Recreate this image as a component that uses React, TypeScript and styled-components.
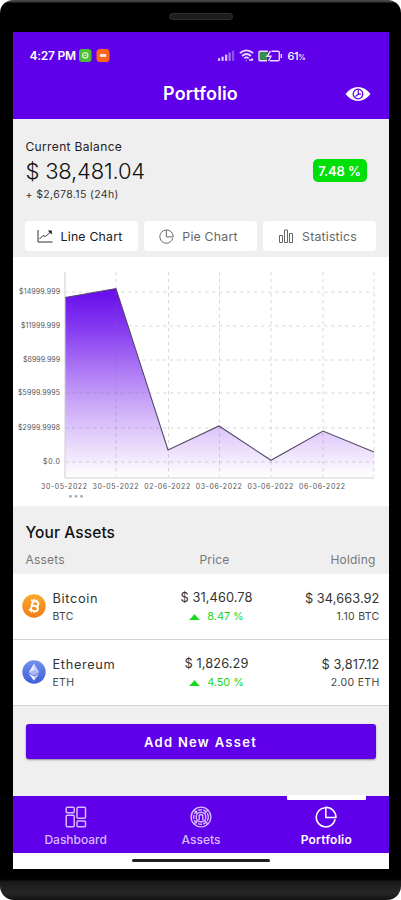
import React from "react";
import styled, { createGlobalStyle, css } from "styled-components";

const purple = "#6000ea";

const Global = createGlobalStyle`
  * { box-sizing: border-box; }
  body { margin: 0; background: #fff; font-family: Inter, "Liberation Sans", sans-serif; }
`;

const Phone = styled.div`
  width: 401px;
  height: 900px;
  display: flex;
  flex-direction: column;
  align-items: center;
  background: linear-gradient(#4b4b4b 0, #3a3a3a 2px, #000 3px, #000 879px, #1b1b1b 882px, #262626 893px, #111 900px);
  border-radius: 13px 13px 14px 14px;
  overflow: hidden;
`;
const Bezel = styled.div`
  height: 32px;
  flex: none;
  padding-top: 13px;
`;
const Speaker = styled.div`
  width: 64px;
  height: 7px;
  border-radius: 4px;
  border: 1px solid #303030;
  background: #1d1d1d;
`;
const Screen = styled.main`
  width: 376px;
  height: 837px;
  flex: none;
  display: flex;
  flex-direction: column;
  background: #efefef;
`;
const Header = styled.header`
  height: 87px;
  flex: none;
  background: ${purple};
  color: #fff;
`;
const StatusBar = styled.div`
  height: 44px;
  padding: 3px 83px 0 17px;
  display: flex;
  align-items: center;
  justify-content: space-between;
`;
const StatusGroup = styled.div<{ $gap: number }>`
  display: flex;
  align-items: center;
  gap: ${(p) => p.$gap}px;
`;
const Clock = styled.span`
  font-size: 12px;
  font-weight: 600;
  letter-spacing: -0.25px;
  width: 45px;
  white-space: nowrap;
`;
const Battery = styled.span`
  font-size: 11px;
  font-weight: 500;
  letter-spacing: -0.3px;
  small { font-size: 7.5px; }
`;
const TitleBar = styled.div`
  height: 35px;
  display: grid;
  grid-template-columns: 1fr auto 1fr;
  align-items: center;
  padding-right: 18px;
  padding-left: 18px;
  svg { justify-self: end; }
`;
const Title = styled.h1`
  grid-column: 2;
  margin: 0;
  font-size: 18px;
  line-height: 24px;
  font-weight: 600;
  letter-spacing: 0.15px;
`;
const Balance = styled.section`
  height: 138px;
  flex: none;
  padding: 20px 13px 0;
`;
const BalanceLabel = styled.div`
  font-size: 12px;
  line-height: 16px;
  letter-spacing: 0.35px;
  color: #222;
`;
const BalanceRow = styled.div`
  display: flex;
  justify-content: space-between;
  align-items: center;
  height: 32px;
  padding-right: 9px;
`;
const Amount = styled.div`
  font-size: 22px;
  font-weight: 350;
  color: #111;
  letter-spacing: -0.2px;
`;
const Badge = styled.div`
  width: 54px;
  height: 23px;
  margin-top: -1px;
  border-radius: 5px;
  background: #00df08;
  color: #fff;
  font-size: 13px;
  font-weight: 600;
  line-height: 24px;
  text-align: center;
  letter-spacing: -0.1px;
`;
const Change = styled.div`
  font-size: 10.5px;
  line-height: 16px;
  letter-spacing: 0.37px;
  color: #333;
`;
const ChartTabs = styled.nav`
  display: grid;
  grid-template-columns: repeat(3, 113px);
  gap: 6px;
  margin: 18px 0 0 -1px;
`;
const ChartTab = styled.button<{ $active?: boolean }>`
  height: 30px;
  border: 0;
  border-radius: 4px;
  padding: 0 3px 0 0;
  background: #fff;
  display: flex;
  align-items: center;
  justify-content: center;
  gap: 8px;
  font: 400 12.3px Inter, sans-serif;
  letter-spacing: 0.2px;
  color: ${(p) => (p.$active ? "#181818" : "#666")};
  white-space: nowrap;
`;
const ChartPanel = styled.section`
  height: 249px;
  flex: none;
  background: #fff;
  svg { display: block; }
`;
const AssetsHead = styled.section`
  height: 68px;
  flex: none;
  padding: 16px 13px 0;
`;
const AssetsTitle = styled.h2`
  margin: 0 0 9px;
  font-size: 15.5px;
  line-height: 21px;
  height: 20px;
  font-weight: 500;
  letter-spacing: 0.1px;
  color: #111;
`;
const columns = css`
  display: grid;
  grid-template-columns: 1fr 110px 1fr;
`;
const ColumnNames = styled.div`
  ${columns}
  font-size: 12px;
  line-height: 17px;
  letter-spacing: 0.2px;
  color: #777;
  span:nth-child(2) { text-align: center; padding-left: 28px; }
  span:nth-child(3) { text-align: right; }
`;
const AssetRow = styled.div`
  ${columns}
  height: 66px;
  flex: none;
  padding: 0 9px;
  background: #fff;
  border-bottom: 1px solid #d2d2d2;
`;
const Coin = styled.div`
  display: flex;
  gap: 7px;
  svg { margin-top: 20px; flex: none; }
`;
const Cell = styled.div<{ $align?: string; $top?: number }>`
  padding-top: ${(p) => p.$top ?? 16}px;
  text-align: ${(p) => p.$align ?? "left"};
  white-space: nowrap;
`;
const PriceCell = styled(Cell)`
  padding-left: 30px;
  margin-right: -2px;
`;
const Main = styled.div<{ $wide?: boolean }>`
  font-size: 12.8px;
  line-height: 18px;
  letter-spacing: ${(p) => (p.$wide ? 0.65 : 0.08)}px;
  color: #333;
`;
const Sub = styled.div`
  font-size: 10.5px;
  line-height: 18px;
  letter-spacing: 0.3px;
  color: #444;
`;
const Gain = styled.div`
  display: flex;
  align-items: center;
  justify-content: center;
  gap: 7px;
  font-size: 10.8px;
  line-height: 20px;
  color: #16d81a;
`;
const Actions = styled.div`
  flex: 1;
  padding: 18px 13px 0;
`;
const AddButton = styled.button`
  width: 350px;
  height: 35px;
  border: 0;
  border-radius: 3px;
  background: ${purple};
  box-shadow: 0 1px 2px rgba(0, 0, 0, 0.4);
  color: #fff;
  font: 600 13px Inter, sans-serif;
  letter-spacing: 1.3px;
`;
const TabBar = styled.nav`
  height: 57px;
  flex: none;
  display: grid;
  grid-template-columns: repeat(3, 1fr);
  background: ${purple};
`;
const Tab = styled.a<{ $active?: boolean }>`
  position: relative;
  display: flex;
  flex-direction: column;
  align-items: center;
  padding-top: 10px;
  padding-left: 1px;
  gap: 3px;
  font-size: 12px;
  line-height: 18px;
  font-weight: 500;
  letter-spacing: -0.02px;
  color: ${(p) => (p.$active ? "#fff" : "#d6bcff")};
  ${(p) =>
    p.$active &&
    css`
      font-weight: 600;
      letter-spacing: 0.25px;
      &::before {
        content: "";
        position: absolute;
        top: -1px;
        width: 79px;
        height: 5px;
        border-radius: 1px;
        background: #fff;
      }
    `}
`;
const HomeBar = styled.div`
  height: 16px;
  flex: none;
  display: flex;
  justify-content: center;
  background: #fff;
  padding-top: 6px;
  &::after {
    content: "";
    width: 138px;
    height: 3px;
    border-radius: 2px;
    background: #202020;
  }
`;

const gridX = [52, 103, 155.5, 206.5, 258, 310, 361];
const gridY = [35, 69, 103, 136, 171, 205];
const yLabels = ["$14999.999", "$11999.999", "$8999.999", "$5999.9995", "$2999.9998", "$0.0"];
const yWidths = [41, 39, 37, 42, 42, 17];
const xLabels = ["30-05-2022", "30-05-2022", "02-06-2022", "03-06-2022", "03-06-2022", "06-06-2022"];
const line = "M52 40.5 L103 31.5 L155 193 L206 169 L258 203.3 L310 174 L361 195";

function PortfolioChart() {
  return (
    <svg width="376" height="249" viewBox="0 0 376 249" fontFamily="Inter, sans-serif" fontSize="7">
      <defs>
        <linearGradient id="area" gradientUnits="userSpaceOnUse" x1="0" y1="31" x2="0" y2="221">
          <stop offset="0" stopColor="#6000ea" stopOpacity="0.97" />
          <stop offset="0.2" stopColor="#6608ee" stopOpacity="0.81" />
          <stop offset="0.6" stopColor="#7417ed" stopOpacity="0.39" />
          <stop offset="1" stopColor="#7d25f0" stopOpacity="0" />
        </linearGradient>
      </defs>
      <path d={`${line} V220.5 H52 Z`} fill="url(#area)" />
      <g stroke="#777" strokeOpacity="0.28" strokeDasharray="3.5 3.5">
        {gridX.slice(1).map((x) => <path key={x} d={`M${x} 15V220`} />)}
        {gridY.map((y) => <path key={y} d={`M52 ${y}H361`} />)}
      </g>
      <path d="M52 15V221H361" fill="none" stroke="#cfcfcf" />
      <path d={line} fill="none" stroke="#554b68" strokeWidth="1.1" />
      {yLabels.map((t, i) => (
        <text key={t} x={47 - yWidths[i]} y={gridY[i] + 2.3} textLength={yWidths[i]} fill="#555">{t}</text>
      ))}
      {xLabels.map((t, i) => (
        <text key={i} x={28 + i * 51.6} y="232" textLength="46" fill="#555">{t}</text>
      ))}
      <g fill="#aaa">
        <circle cx="57.5" cy="239.3" r="1.4" />
        <circle cx="63" cy="239.3" r="1.4" />
        <circle cx="68.5" cy="239.3" r="1.4" />
      </g>
    </svg>
  );
}

const StatusIcons = () => (
  <>
    <svg width="17" height="13" viewBox="0 0 17 13" fill="#d8c2ff">
      <rect y="9" width="2.2" height="3" rx=".8" />
      <rect x="3.5" y="7.5" width="2.2" height="4.5" rx=".8" />
      <rect x="7" y="5.5" width="2.2" height="6.5" rx=".8" />
      <rect x="10.5" y="3.5" width="2.2" height="8.5" rx=".8" opacity=".6" />
      <rect x="14" y="1.5" width="2.2" height="10.5" rx=".8" opacity=".4" />
    </svg>
    <svg width="15" height="13" viewBox="0 0 15 13" fill="none" stroke="#e7dbff" strokeWidth="1.7">
      <path d="M.8 4.2Q7.5-1.4 14.2 4.2M3 7Q7.5 3 12 7M5.3 9.3q2.2-2 4.4 0" />
      <path d="M7 11.5l.5.5M10 11h4M12.5 9.5L14 11" strokeWidth="1.3" />
    </svg>
    <svg width="25" height="12" viewBox="0 0 25 12" fill="none" stroke="#e9ddff" strokeWidth="1.4">
      <rect x="1.7" y="1.7" width="7.5" height="8.6" fill="#388e52" stroke="none" />
      <path d="M9 10.8H2.2Q1 10.8 1 9.6V2.4Q1 1.2 2.2 1.2H10M13.5 1.2H20Q21.3 1.2 21.3 2.5V9.5Q21.3 10.8 20 10.8H12M23.3 4v4" />
      <path d="M12.5 1L9 6.3h4L10.5 11" />
    </svg>
  </>
);

const EyeIcon = () => (
  <svg width="26" height="18" viewBox="0 0 26 18">
    <path d="M.5 9Q6 2 13 2T25.5 9Q20 16 13 16T.5 9Z" fill="#fff" />
    <circle cx="13" cy="9" r="4.8" fill="none" stroke={purple} strokeWidth="1.3" />
    <path d="M13.3 4.5V9.2L10.5 11.5M13.3 9.2H16" fill="none" stroke={purple} strokeWidth="1.2" />
  </svg>
);

const PieIcon = ({ size, weight }: { size: number; weight: number }) => (
  <svg width={size} height={size} viewBox="0 0 22 22" fill="none" stroke="currentColor" strokeWidth={weight} strokeLinejoin="round">
    <path d="M10 1.7A9.6 9.6 0 1 0 20.2 13.2" />
    <path d="M10.8 1.2v10.3h10.2A10.2 10.3 0 0 0 10.8 1.2Z" />
  </svg>
);

const BitcoinIcon = () => (
  <svg width="24" height="24" viewBox="0 0 24 24">
    <defs>
      <linearGradient id="btc" x1="0" y1="0" x2="0" y2="1">
        <stop stopColor="#faa829" />
        <stop offset="1" stopColor="#f07e16" />
      </linearGradient>
    </defs>
    <circle cx="12" cy="12" r="11.7" fill="url(#btc)" />
    <g transform="rotate(14 12 12)" fill="none" stroke="#fff" strokeWidth="2">
      <path d="M7.8 7.2h5.7a2.3 2.3 0 0 1 0 4.6H9.8M9.8 7v9.8M9.8 11.8H14a2.5 2.5 0 0 1 0 5H7.8" />
      <path d="M10.7 5v2M13.4 5v2M10.7 17v2M13.4 17v2" strokeWidth="1.4" />
    </g>
  </svg>
);

const EthereumIcon = () => (
  <svg width="24" height="24" viewBox="0 0 24 24">
    <defs>
      <linearGradient id="eth" x1="0" y1="0" x2="0" y2="1">
        <stop stopColor="#7391ea" />
        <stop offset="1" stopColor="#3e5dda" />
      </linearGradient>
    </defs>
    <circle cx="12" cy="12" r="11.7" fill="url(#eth)" />
    <path d="M12 3.5L6.8 12.2 12 15.2Z" fill="#e8edff" />
    <path d="M12 3.5l5.2 8.7L12 15.2Z" fill="#c3cffa" />
    <path d="M6.8 12.2L12 10l5.2 2.2-5.2 3Z" fill="#a9baf3" />
    <path d="M6.8 13.6l5.2 3v4.2Z" fill="#fff" />
    <path d="M17.2 13.6l-5.2 3v4.2Z" fill="#cbd5fb" />
  </svg>
);

const assets = [
  { icon: <BitcoinIcon />, name: "Bitcoin", code: "BTC", price: "$ 31,460.78", gain: "8.47 %", value: "$ 34,663.92", held: "1.10 BTC" },
  { icon: <EthereumIcon />, name: "Ethereum", code: "ETH", price: "$ 1,826.29", gain: "4.50 %", value: "$ 3,817.12", held: "2.00 ETH" },
];

export default function App() {
  return (
    <>
      <Global />
      <Phone>
        <Bezel><Speaker /></Bezel>
        <Screen>
          <Header>
            <StatusBar>
              <StatusGroup $gap={4}>
                <Clock>4:27 PM</Clock>
                <svg width="31" height="13" viewBox="0 0 31 13">
                  <rect width="12.5" height="13" rx="3" fill="#4dbd36" />
                  <circle cx="6.2" cy="6.3" r="2.7" fill="none" stroke="#d4f4c8" strokeWidth="1.3" />
                  <path d="M5 6.3h2.5" stroke="#d4f4c8" />
                  <rect x="17.5" width="13" height="13" rx="3.5" fill="#ff641b" />
                  <rect x="20.8" y="5" width="6.5" height="3" rx="1" fill="#ffe9dc" />
                </svg>
              </StatusGroup>
              <StatusGroup $gap={4}>
                <StatusIcons />
                <Battery>61<small>%</small></Battery>
              </StatusGroup>
            </StatusBar>
            <TitleBar>
              <Title>Portfolio</Title>
              <EyeIcon />
            </TitleBar>
          </Header>

          <Balance>
            <BalanceLabel>Current Balance</BalanceLabel>
            <BalanceRow>
              <Amount>$ 38,481.04</Amount>
              <Badge>7.48 %</Badge>
            </BalanceRow>
            <Change>+ $2,678.15 (24h)</Change>
            <ChartTabs>
              <ChartTab $active>
                <svg width="16" height="14" viewBox="0 0 16 14" fill="none" stroke="currentColor">
                  <path d="M1 1v12h14.5M2.5 10L6 6.5l2.5 1L14 2.5" strokeWidth="0.9" />
                  <path d="M10.8 1.5h4v4Z" fill="currentColor" stroke="none" />
                </svg>
                Line Chart
              </ChartTab>
              <ChartTab>
                <PieIcon size={15} weight={1.4} />
                Pie Chart
              </ChartTab>
              <ChartTab>
                <svg width="16" height="15" viewBox="0 0 16 15" fill="none" stroke="currentColor">
                  <path d="M1.5 6.5h3v7h-3zM6.5 1h3v12.5h-3zM11.5 4.5h3v9h-3z" />
                </svg>
                Statistics
              </ChartTab>
            </ChartTabs>
          </Balance>

          <ChartPanel><PortfolioChart /></ChartPanel>

          <AssetsHead>
            <AssetsTitle>Your Assets</AssetsTitle>
            <ColumnNames><span>Assets</span><span>Price</span><span>Holding</span></ColumnNames>
          </AssetsHead>
          {assets.map((a) => (
            <AssetRow key={a.code}>
              <Coin>
                {a.icon}
                <Cell><Main $wide>{a.name}</Main><Sub>{a.code}</Sub></Cell>
              </Coin>
              <PriceCell $align="center" $top={15}>
                <Main>{a.price}</Main>
                <Gain>
                  <svg width="11" height="6" viewBox="0 0 11 6"><path d="M0 6Q3 3.5 5.5 0 8 3.5 11 6Z" fill="currentColor" /></svg>
                  {a.gain}
                </Gain>
              </PriceCell>
              <Cell $align="right"><Main>{a.value}</Main><Sub>{a.held}</Sub></Cell>
            </AssetRow>
          ))}
          <Actions><AddButton>Add New Asset</AddButton></Actions>

          <TabBar>
            <Tab>
              <svg width="22" height="22" viewBox="0 0 22 22" fill="none" stroke="currentColor" strokeWidth="1.5">
                <rect x="1.2" y="1.2" width="8" height="5.5" rx="1" />
                <rect x="12" y="1.2" width="8.5" height="11" rx="1" />
                <rect x="1.2" y="9.2" width="8" height="11.5" rx="1" />
                <rect x="12" y="15" width="8.5" height="5.7" rx="1" />
              </svg>
              Dashboard
            </Tab>
            <Tab>
              <svg width="22" height="22" viewBox="0 0 22 22" fill="none" stroke="currentColor" strokeWidth="1.4">
                <circle cx="11" cy="11" r="9.9" />
                <circle cx="11" cy="11" r="7.3" strokeDasharray="4 1.2" />
                <circle cx="11" cy="11" r="4.8" />
                <path d="M9.2 14V9.5Q11 7.5 12.8 9.5V14M4 4l3.5 3.5M18 4l-3.5 3.5M4 18l3.5-3.5M18 18l-3.5-3.5" />
              </svg>
              Assets
            </Tab>
            <Tab $active>
              <PieIcon size={22} weight={1.6} />
              Portfolio
            </Tab>
          </TabBar>
          <HomeBar />
        </Screen>
      </Phone>
    </>
  );
}
